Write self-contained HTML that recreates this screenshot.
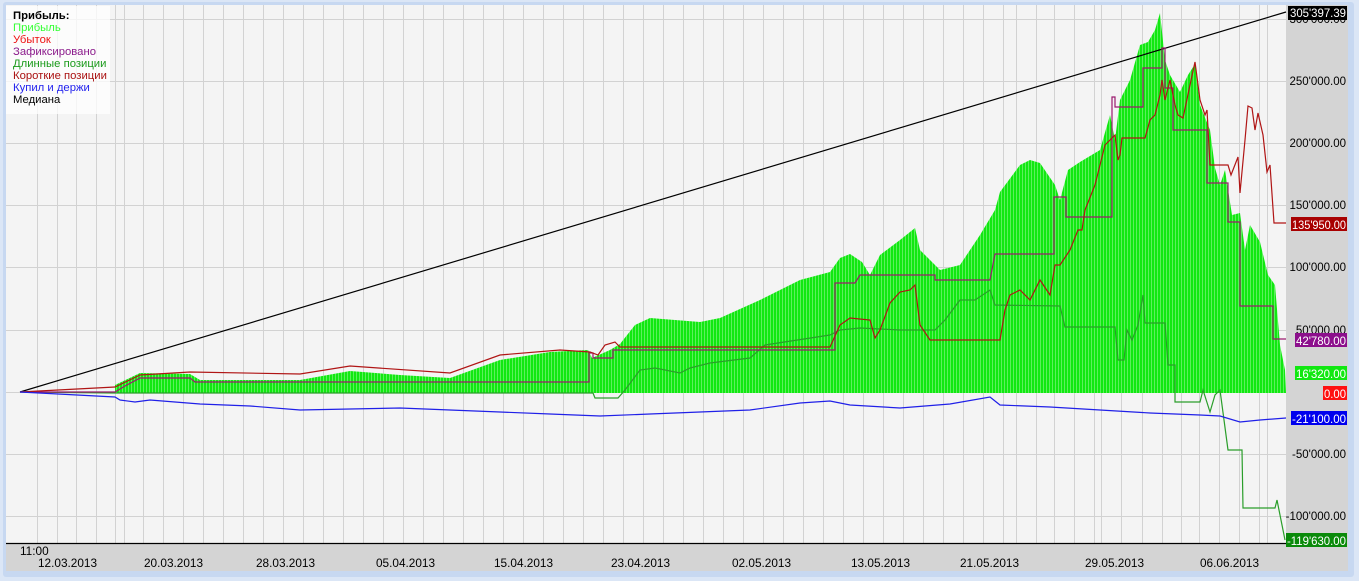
<!DOCTYPE html>
<html><head><meta charset="utf-8"><style>
html,body{margin:0;padding:0;width:1359px;height:581px;overflow:hidden;background:#dbe6f6;font-family:"Liberation Sans",sans-serif}
svg{position:absolute;left:0;top:0}
</style></head><body>
<svg width="1359" height="581" xmlns="http://www.w3.org/2000/svg">
<defs>
<pattern id="bars" width="3" height="10" patternUnits="userSpaceOnUse">
<rect x="0" y="0" width="2" height="10" fill="#11e811"/><rect x="2" y="0" width="1" height="10" fill="#5cf05c"/>
</pattern>
</defs>
<rect x="0" y="0" width="1359" height="581" fill="#dbe6f6"/>
<rect x="3" y="2" width="1351" height="575" fill="#c7d8f1" rx="3"/>
<rect x="6" y="5" width="1342" height="566" fill="#d4d4d4"/>
<rect x="6" y="5" width="1280" height="538" fill="#f4f4f4"/>
<g stroke="#d2d2d2" stroke-width="1" id="grid"></g>
<polygon fill="url(#bars)" points="115,393 115,385 140,373 190,374 200,380 300,380 350,371 400,375 450,378 500,360 550,352 588,350 592,358 610,350 620,344 635,325 650,318 700,322 720,318 760,300 800,280 830,272 840,258 850,254 862,262 870,275 880,255 900,240 915,228 920,250 940,270 960,265 980,235 995,210 1000,192 1020,165 1030,160 1040,163 1055,185 1060,200 1068,170 1080,162 1100,150 1110,115 1115,140 1120,100 1130,80 1140,45 1148,42 1155,30 1160,13 1165,60 1170,75 1180,92 1188,75 1195,64 1200,105 1210,130 1215,168 1220,185 1225,170 1232,215 1240,213 1245,250 1250,225 1260,242 1268,275 1275,285 1280,345 1285,370 1286,393"/>
<polyline fill="none" stroke="#000" stroke-width="1.2" points="20,392 1286,12"/>
<polyline fill="none" stroke="#2a9e2a" stroke-width="1.2" points="20,392 115,393 560,393 593,393 595,398 618,398 625,390 640,370 655,368 680,373 690,368 710,363 750,358 765,345 830,335 840,330 860,328 900,330 935,330 945,320 960,300 975,300 990,290 995,305 1060,306 1065,327 1115,327 1118,360 1124,360 1127,330 1132,340 1138,325 1143,295 1145,323 1165,323 1168,365 1175,365 1175,402 1200,402 1203,390 1210,412 1215,395 1220,390 1224,420 1228,450 1242,450 1243,508 1275,508 1277,500 1285,540"/>
<polyline fill="none" stroke="#9b1a6e" stroke-width="1.2" points="20,392 115,392 125,386 140,378 190,378 195,382 589,382 589,353 593,353 593,358 613,358 613,350 835,350 835,283 855,283 860,275 935,275 935,280 990,280 995,254 1054,254 1054,197 1066,197 1066,217 1112,217 1112,97 1115,97 1115,107 1143,107 1143,68 1162,68 1162,48 1165,48 1165,88 1173,88 1173,130 1207,130 1207,183 1228,183 1228,222 1240,222 1240,306 1273,306 1273,339 1286,339"/>
<polyline fill="none" stroke="#b01515" stroke-width="1.2" points="20,392 115,387 140,375 190,372 300,374 350,366 450,373 500,355 560,350 590,352 598,355 605,345 615,342 620,347 830,347 840,325 850,318 870,320 875,338 880,330 890,303 900,292 910,290 915,285 920,325 930,340 1000,340 1005,310 1010,295 1020,290 1030,300 1040,280 1050,295 1055,265 1060,265 1070,250 1078,230 1082,230 1085,210 1095,185 1105,145 1115,135 1118,160 1120,155 1122,138 1145,138 1150,120 1155,115 1160,95 1162,80 1165,100 1170,80 1175,105 1178,115 1183,118 1190,85 1195,62 1200,100 1205,115 1207,110 1210,165 1228,165 1231,175 1238,157 1240,193 1245,140 1248,106 1252,108 1255,130 1258,113 1263,135 1267,172 1270,165 1274,223 1286,223"/>
<polyline fill="none" stroke="#2020e8" stroke-width="1.2" points="20,392 115,397 120,400 135,402 150,400 175,402 200,404 250,406 300,410 350,409 400,408 450,410 500,412 550,414 600,416 650,414 700,412 750,410 800,403 830,401 850,405 900,408 950,404 990,397 1000,405 1050,407 1100,410 1150,413 1200,415 1220,416 1240,422 1260,420 1286,418"/>
<line x1="6" y1="543.5" x2="1286" y2="543.5" stroke="#000" stroke-width="1.2"/>
<rect x="6" y="6" width="104" height="108" fill="#ffffff" fill-opacity="0.75"/>
<g font-size="11.3" font-family="Liberation Sans, DejaVu Sans, sans-serif">
<text x="13" y="19" font-weight="bold" fill="#000">Прибыль:</text>
<text x="13" y="31" fill="#33ff33">Прибыль</text>
<text x="13" y="43" fill="#ee1111">Убыток</text>
<text x="13" y="55" fill="#8b1a8b">Зафиксировано</text>
<text x="13" y="67" fill="#1a9a1a">Длинные позиции</text>
<text x="13" y="79" fill="#aa1111">Короткие позиции</text>
<text x="13" y="91" fill="#2222ee">Купил и держи</text>
<text x="13" y="103" fill="#000">Медиана</text>
</g>
<g font-size="11.5" text-anchor="end" fill="#000">
<text x="1346" y="23">300'000.00</text>
<text x="1346" y="85">250'000.00</text>
<text x="1346" y="147">200'000.00</text>
<text x="1346" y="209">150'000.00</text>
<text x="1346" y="271">100'000.00</text>
<text x="1346" y="334">50'000.00</text>
<text x="1346" y="458">-50'000.00</text>
<text x="1346" y="520">-100'000.00</text>
</g>
<g font-size="11.5" fill="#fff">
<rect x="1288" y="6" width="59" height="14" fill="#000"/><text x="1290" y="17" textLength="56" lengthAdjust="spacingAndGlyphs">305'397.39</text>
<rect x="1291" y="217" width="56" height="14" fill="#a80000"/><text x="1292" y="229" textLength="54" lengthAdjust="spacingAndGlyphs">135'950.00</text>
<rect x="1295" y="333" width="52" height="14" fill="#8c0f8c"/><text x="1296" y="345" textLength="50" lengthAdjust="spacingAndGlyphs">42'780.00</text>
<rect x="1295" y="366" width="52" height="14" fill="#11e811"/><text x="1296" y="378" textLength="50" lengthAdjust="spacingAndGlyphs">16'320.00</text>
<rect x="1323" y="386" width="24" height="14" fill="#ff1010"/><text x="1324" y="398" textLength="22" lengthAdjust="spacingAndGlyphs">0.00</text>
<rect x="1291" y="411" width="56" height="14" fill="#0000ee"/><text x="1292" y="423" textLength="54" lengthAdjust="spacingAndGlyphs">-21'100.00</text>
<rect x="1286" y="533" width="61" height="14" fill="#0a8a0a"/><text x="1287" y="545" textLength="59" lengthAdjust="spacingAndGlyphs">-119'630.00</text>
</g>
<g font-size="11.8" fill="#000">
<text x="20" y="555">11:00</text>
<text x="38" y="567">12.03.2013</text>
<text x="144" y="567">20.03.2013</text>
<text x="256" y="567">28.03.2013</text>
<text x="376" y="567">05.04.2013</text>
<text x="494" y="567">15.04.2013</text>
<text x="611" y="567">23.04.2013</text>
<text x="732" y="567">02.05.2013</text>
<text x="851" y="567">13.05.2013</text>
<text x="960" y="567">21.05.2013</text>
<text x="1085" y="567">29.05.2013</text>
<text x="1200" y="567">06.06.2013</text>
</g>
</svg>
<script>
var g=document.getElementById('grid'),ns='http://www.w3.org/2000/svg';
var xs=[37,57,76,96,115,124,143,163,183,203,223,243,263,283,303,323,343,363,383,403,423,443,463,483,503,523,543,563,583,603,623,643,663,683,703,723,743,763,783,803,823,843,863,883,903,923,943,963,983,1003,1016,1036,1054,1074,1094,1101,1121,1142,1162,1181,1199,1219,1239,1259,1267];
xs.forEach(function(x){var l=document.createElementNS(ns,'line');l.setAttribute('x1',x+.5);l.setAttribute('x2',x+.5);l.setAttribute('y1',5);l.setAttribute('y2',543);g.appendChild(l);});
[19,81,143,205,267,330,392,454,516].forEach(function(y){var l=document.createElementNS(ns,'line');l.setAttribute('x1',6);l.setAttribute('x2',1286);l.setAttribute('y1',y+.5);l.setAttribute('y2',y+.5);g.appendChild(l);});
</script>
</body></html>
